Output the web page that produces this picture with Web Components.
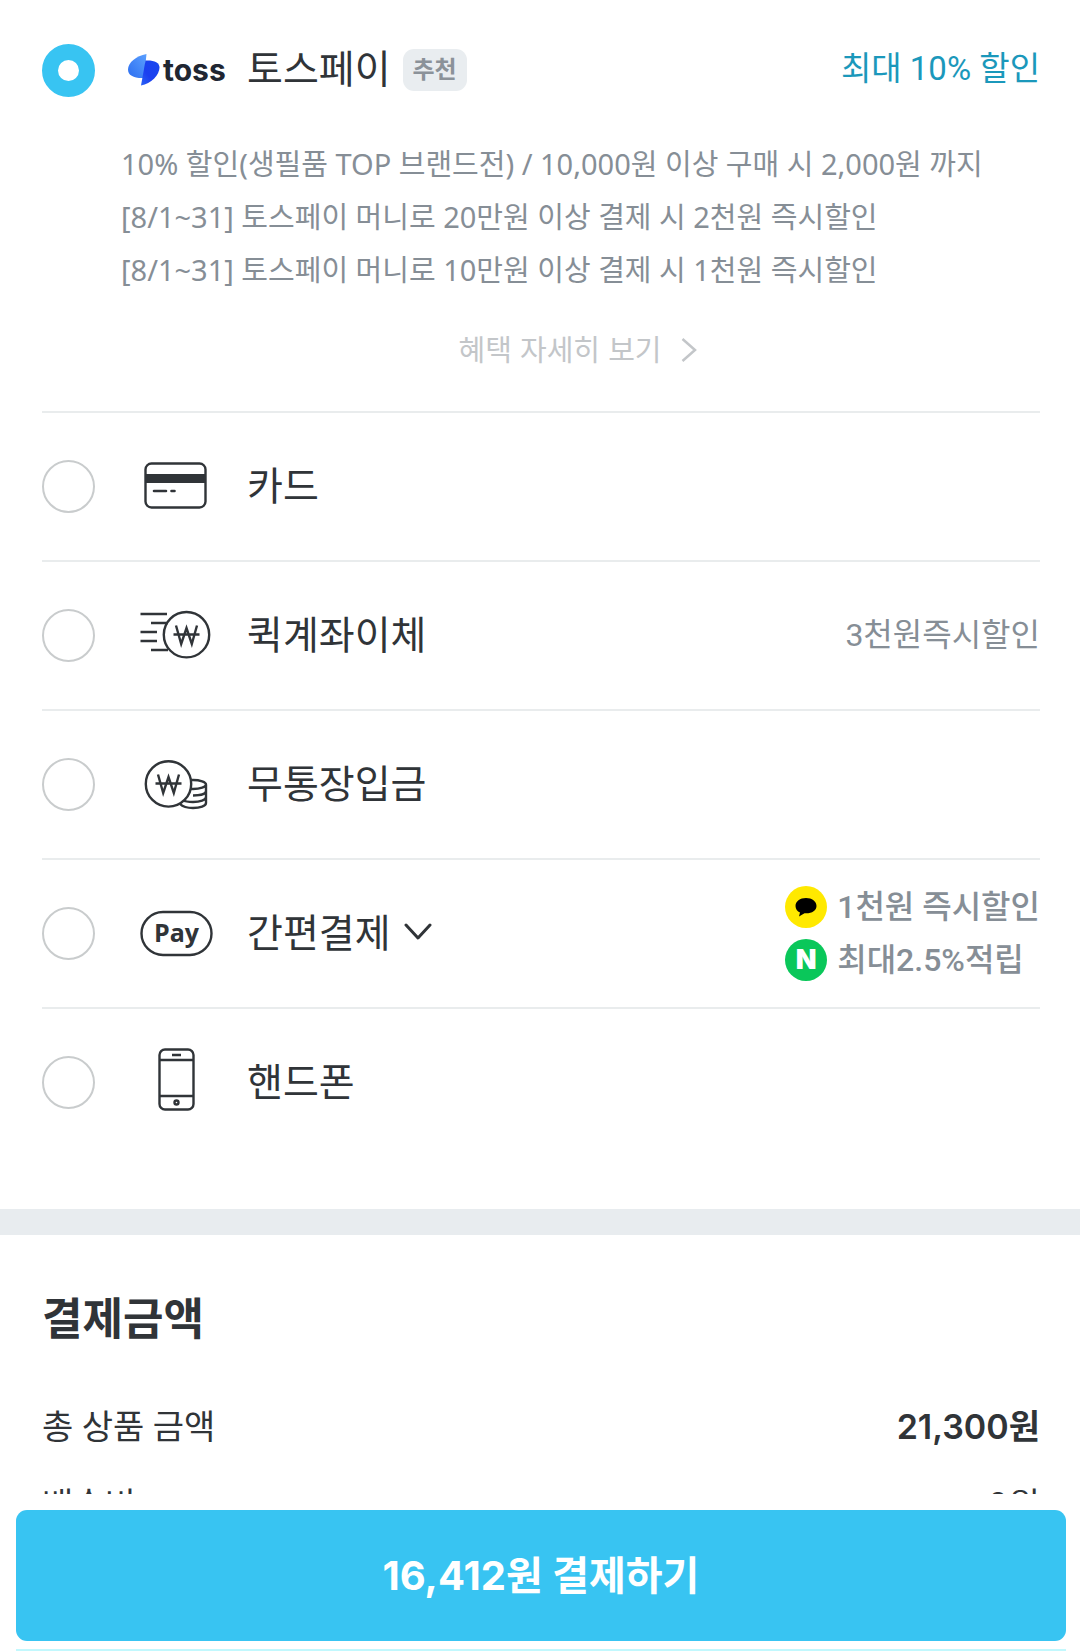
<!DOCTYPE html>
<html lang="ko">
<head>
<meta charset="utf-8">
<meta name="viewport" content="width=device-width, initial-scale=1">
<title>결제</title>
<style>
  html, body { margin: 0; height: 100%; background: #fff; }
  body {
    --ink: #303438;
    --muted: #868e96;
    --line: #e9eced;
    --brand: #38c4f2;
    --ui: Inter, "Noto Sans CJK KR", sans-serif;
    --alt: Roboto, "Noto Sans CJK KR", sans-serif;
    --note: "Noto Sans", "Noto Sans CJK KR", sans-serif;
    font-family: var(--ui);
    color: var(--ink);
  }
</style>
</head>
<body>
<checkout-page>
  <payment-methods>
    <payment-option label="토스페이" value="toss" badge="추천" checked>
      <toss-logo slot="icon"></toss-logo>
      <benefit-tag slot="benefit" accent>최대 10% 할인</benefit-tag>
      <benefit-details slot="details">
        <li>10% 할인(생필품 TOP 브랜드전) / 10,000원 이상 구매 시 2,000원 까지</li>
        <li>[8/1~31] 토스페이 머니로 20만원 이상 결제 시 2천원 즉시할인</li>
        <li>[8/1~31] 토스페이 머니로 10만원 이상 결제 시 1천원 즉시할인</li>
      </benefit-details>
    </payment-option>
    <payment-option label="카드" value="card">
      <method-icon slot="icon" name="card"></method-icon>
    </payment-option>
    <payment-option label="퀵계좌이체" value="quick">
      <method-icon slot="icon" name="quick"></method-icon>
      <benefit-tag slot="benefit">3천원즉시할인</benefit-tag>
    </payment-option>
    <payment-option label="무통장입금" value="deposit">
      <method-icon slot="icon" name="coins"></method-icon>
    </payment-option>
    <payment-option label="간편결제" value="easy" expandable>
      <method-icon slot="icon" name="pay"></method-icon>
      <benefit-tag slot="benefit" brand="kakao">1천원 즉시할인</benefit-tag>
      <benefit-tag slot="benefit" brand="naver">최대2.5%적립</benefit-tag>
    </payment-option>
    <payment-option label="핸드폰" value="phone">
      <method-icon slot="icon" name="phone"></method-icon>
    </payment-option>
  </payment-methods>
  <amount-summary>
    <span slot="title">결제금액</span>
    <amount-row label="총 상품 금액" strong>21,300원</amount-row>
    <amount-row label="배송비">0원</amount-row>
  </amount-summary>
  <pay-bar slot="footer">16,412원 결제하기</pay-bar>
</checkout-page>

<script>
const define = (name, html, setup) => {
  const template = document.createElement('template');
  template.innerHTML = html;
  customElements.define(name, class extends HTMLElement {
    constructor() {
      super();
      this.attachShadow({ mode: 'open' }).append(template.content.cloneNode(true));
    }
    connectedCallback() { if (setup) setup(this, this.shadowRoot); }
  });
};

define('checkout-page', `
  <style>
    :host { display: flex; flex-direction: column; height: 100vh; overflow: hidden; }
    main { flex: 1; min-height: 0; overflow-y: auto; scrollbar-width: none; }
  </style>
  <main><slot></slot></main>
  <slot name="footer"></slot>`);

define('payment-methods', `
  <style>
    :host { display: block; padding: 34px 40px 53px 42px; border-bottom: 26px solid #e8ecef; }
  </style>
  <div role="radiogroup" aria-label="결제수단"><slot></slot></div>`,
  host => host.addEventListener('method-selected', event => {
    for (const option of host.querySelectorAll('payment-option')) {
      option.shadowRoot.querySelector('input').checked = option === event.target;
    }
  }));

define('payment-option', `
  <style>
    :host { display: block; border-top: 2px solid var(--line); }
    :host(:first-child) { border-top: 0; }
    .row { display: flex; align-items: center; min-height: 147px; }
    :host(:first-child) .row { min-height: 72px; }
    input {
      appearance: none; box-sizing: border-box; flex: none;
      width: 53px; height: 53px; margin: 0 33px 0 0;
      border: 2px solid #c9cccd; border-radius: 50%; background: #fff;
    }
    input:checked { border: 16px solid var(--brand); }
    label { display: flex; align-items: center; gap: 23px; font: 400 39px/52px var(--alt); white-space: nowrap; }
    .badge {
      margin-left: 12px; padding: 0 10px; border-radius: 11px; background: #e9edf0;
      color: #8b9299; font-size: 24px; line-height: 42px; font-weight: 700;
    }
    .toggle { margin-left: 13px; padding: 0 0 4px; border: 0; background: none; display: flex; }
    .badge[hidden], .toggle[hidden] { display: none; }
    .benefits { margin-left: auto; display: flex; flex-direction: column; }
  </style>
  <div class="row">
    <input type="radio" id="method" name="method">
    <label for="method"><slot name="icon"></slot><span class="text"></span></label>
    <span class="badge" hidden></span>
    <button class="toggle" type="button" aria-label="펼치기" hidden>
      <svg width="28" height="20" viewBox="0 0 28 20" fill="none" stroke="#303438" stroke-width="3" stroke-linecap="round" stroke-linejoin="round"><path d="M2 3l12 13L26 3"/></svg>
    </button>
    <div class="benefits"><slot name="benefit"></slot></div>
  </div>
  <slot name="details"></slot>`,
  (host, root) => {
    const input = root.querySelector('input');
    const badge = root.querySelector('.badge');
    root.querySelector('.text').textContent = host.getAttribute('label');
    input.value = host.getAttribute('value');
    input.checked = host.hasAttribute('checked');
    badge.textContent = host.getAttribute('badge') || '';
    badge.hidden = !host.hasAttribute('badge');
    root.querySelector('.toggle').hidden = !host.hasAttribute('expandable');
    input.addEventListener('change', () =>
      host.dispatchEvent(new CustomEvent('method-selected', { bubbles: true })));
  });

define('toss-logo', `
  <style>
    :host { display: flex; align-items: center; width: 96px; height: 72px; gap: 3px; color: #202632; }
    svg { flex: none; }
    span { font: 700 30px/36px Inter, sans-serif; }
  </style>
  <svg width="32" height="34" viewBox="0 0 32 34" aria-hidden="true">
    <defs>
      <linearGradient id="light" x1="1" y1="0" x2="0" y2="1"><stop offset="0" stop-color="#5ba0ff"/><stop offset="1" stop-color="#2c6ef0"/></linearGradient>
      <linearGradient id="deep" x1="1" y1="0" x2="0" y2="1"><stop offset="0" stop-color="#1747ee"/><stop offset=".6" stop-color="#1b3ff0"/><stop offset="1" stop-color="#2b63f5"/></linearGradient>
    </defs>
    <path fill="url(#light)" d="M18.500 1C8 3 0 9.500 0 16.500C0 22.500 6 25.500 16 25z"/>
    <path fill="url(#deep)" d="M17.500 7.500C26 7 31.500 9.500 31.500 14.500C31.500 22 23 31 13 32.500z"/>
  </svg>
  <span>toss</span>`);

const won = x => `<path d="M${x - 10.5} 26.500l5.200 18.500 5.300-16 5.300 16 5.200-18.500M${x - 13} 35.500h26"/>`;
const icons = {
  card: `<rect x="17.500" y="12.500" width="60" height="44" rx="6"/><path d="M17.500 27.500h60" stroke-width="9"/><path d="M26 40h12M43.500 40h3" stroke-linecap="round" stroke-width="2.600"/>`,
  quick: `<circle cx="58.500" cy="34.700" r="22.700"/><path d="M12.500 14H39M23 23h17M12.500 32H29M12.500 41H29M23 50h17"/><g transform="translate(0 -1)">${won(58.5)}</g>`,
  coins: `<ellipse cx="65" cy="35.500" rx="13" ry="4.500"/><path d="M78 36v18c0 3-6 5-13 5s-11-2-13-4M78 42c0 3-6 4.500-13 4.500M78 48c0 3-6 5-13 5-4 0-8-.5-11-2"/><circle cx="40.500" cy="34.900" r="22.700" fill="#fff"/><g transform="translate(0 -1)">${won(40.5)}</g>`,
  pay: `<rect x="13.500" y="14" width="70" height="43" rx="21.500"/><text x="48.500" y="44" text-anchor="middle" fill="#303438" stroke="none" font-family="Open Sans, sans-serif" font-weight="700" font-size="25">Pay</text>`,
  phone: `<rect x="31.500" y="2.500" width="34" height="60" rx="5.500"/><path d="M31.500 13h34M31.500 49h34M44 8h9"/><circle cx="48.500" cy="55.500" r="2"/>`
};

define('method-icon', `
  <style>
    :host, svg { display: block; }
  </style>
  <svg width="96" height="72" viewBox="0 0 96 72" fill="none" stroke="#303438" stroke-width="2.400" aria-hidden="true"></svg>`,
  (host, root) => { root.querySelector('svg').innerHTML = icons[host.getAttribute('name')]; });

define('benefit-tag', `
  <style>
    :host { display: flex; align-items: center; gap: 10px; color: var(--muted); font: 400 32px/53px var(--alt); white-space: nowrap; }
    :host([accent]) { color: #1b98bb; font-size: 33px; padding-bottom: 3px; }
    :host([brand]) { font-weight: 500; }
    .mark { display: none; flex: none; width: 42px; height: 42px; border-radius: 50%; align-items: center; justify-content: center; }
    :host([brand="kakao"]) .kakao { display: flex; background: #ffe900; }
    :host([brand="naver"]) .naver { display: flex; background: #0ac75a; color: #fff; font: 900 27px/42px Inter, sans-serif; }
  </style>
  <span class="mark kakao"><svg width="22" height="20" viewBox="0 0 22 20"><path d="M11 1C5 1 .5 4.500.5 9c0 3 1.800 5.200 4.500 6.600L4 19.500l5.500-3.200c7 .6 12-2.700 12-7.300C21.500 4.500 17 1 11 1z"/></svg></span>
  <span class="mark naver" aria-label="네이버">N</span>
  <span><slot></slot></span>`);

define('benefit-details', `
  <style>
    :host { display: block; padding: 31px 0 34px 79px; }
    ul { margin: 0; padding: 0; list-style: none; color: var(--muted); font: 400 29px/53px var(--note); }
    a { display: flex; align-items: center; justify-content: center; gap: 19px; margin-top: 29px; color: #c3c6c9; font-size: 29px; line-height: 52px; text-decoration: none; }
  </style>
  <ul><slot></slot></ul>
  <a href="#benefits">혜택 자세히 보기
    <svg width="22" height="26" viewBox="0 0 22 26" fill="none" stroke="currentColor" stroke-width="2.500"><path d="M1.500 1L14 12 1.500 23"/></svg>
  </a>`);

define('amount-summary', `
  <style>
    :host { display: block; padding: 52px 40px 60px 42px; }
    h2 { margin: 0 0 46px; font-size: 44px; line-height: 64px; font-weight: 700; }
  </style>
  <h2><slot name="title"></slot></h2>
  <div><slot></slot></div>`);

define('amount-row', `
  <style>
    :host { display: flex; justify-content: space-between; padding-bottom: 18px; font-size: 34px; line-height: 60px; }
    .name { font-family: var(--alt); }
    :host([strong]) .value { font-weight: 600; }
  </style>
  <span class="name"></span><span class="value"><slot></slot></span>`,
  (host, root) => { root.querySelector('.name').textContent = host.getAttribute('label'); });

define('pay-bar', `
  <style>
    :host { display: block; flex: none; padding: 16px 14px 0 16px; background: #fff; }
    button {
      display: block; width: 100%; height: 131px; padding: 0; border: 0; border-radius: 11px;
      background: var(--brand); color: #fff; font: 700 40px/60px var(--ui);
    }
    .edge { height: 2px; margin-top: 8px; background: #c2f8fd; }
  </style>
  <button type="button"><slot></slot></button>
  <div class="edge"></div>`);
</script>
</body>
</html>
